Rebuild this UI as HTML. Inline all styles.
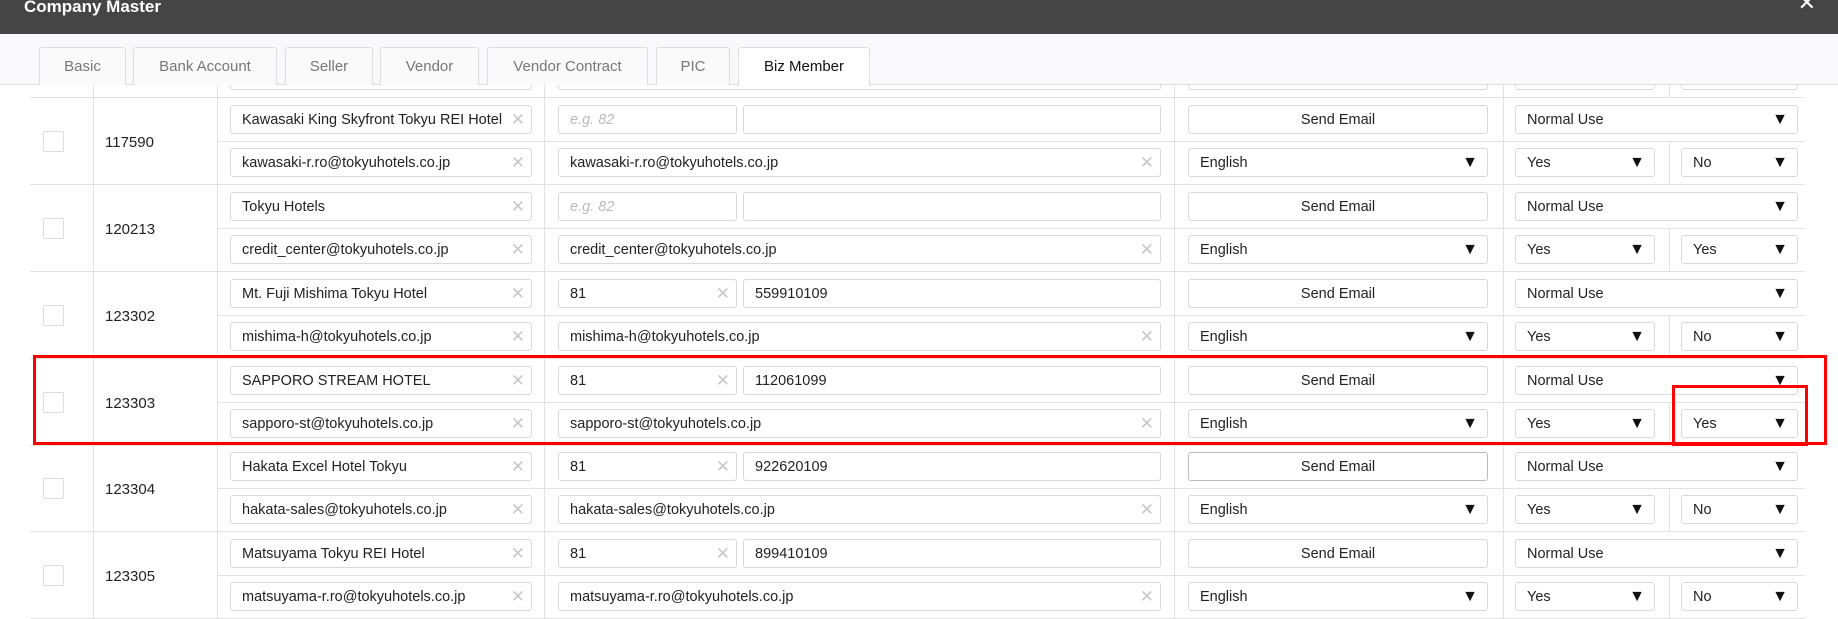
<!DOCTYPE html>
<html><head><meta charset="utf-8"><style>
*{box-sizing:border-box;margin:0;padding:0}
body{width:1838px;height:614px;overflow:hidden;background:#fff;font-family:"Liberation Sans",Arial,sans-serif;font-size:15px;color:#222;position:relative}
.hdr{position:absolute;left:0;top:0;width:1838px;height:34px;background:#454545;color:#fff;font-weight:bold;font-size:17px;padding:0 0 0 24px;line-height:14px;z-index:5}
.close{position:absolute;right:22px;top:-4px;font-size:22px;font-weight:normal;color:#fff}
.tabs{position:absolute;left:0;top:34px;width:1838px;height:51px;background:#f9f8fa;border-bottom:1px solid #ddd;z-index:5}
.tab{position:absolute;top:13px;height:38px;border:1px solid #ddd;border-bottom:none;border-radius:3px 3px 0 0;background:#fafafa;color:#777;text-align:center;line-height:38px;font-size:15px}
.tab.act{background:#fff;color:#111;height:39px}
.g{position:absolute;left:30px;width:1775px;height:87px;border-bottom:1px solid #e2e2e2}
.g .mid{position:absolute;left:187px;right:0;top:43px;border-top:1px solid #e2e2e2}
.vl{position:absolute;top:0;bottom:0;border-left:1px solid #e2e2e2}
.vl2{position:absolute;top:44px;bottom:0;border-left:1px solid #e2e2e2}
.cb{position:absolute;left:13px;top:33px;width:21px;height:21px;border:1px solid #ddd;border-radius:2px;background:#fff}
.id{position:absolute;left:75px;top:36px;font-size:15px}
.in{position:absolute;height:29px;border:1px solid #d9d9d9;border-radius:3px;background:#fff;line-height:29px;padding-left:11px;white-space:nowrap;overflow:hidden;font-size:14.5px}
.x{position:absolute;right:6px;top:0;color:#c8c8c8;font-size:17px;background:#fff;padding-left:2px;line-height:28px}
.ph{color:#bbb;font-style:italic}
.arr{position:absolute;right:9px;top:0;font-size:16px;color:#111;line-height:28px}
.btn{text-align:center;padding:0}
.r1{top:7px}.r2{top:50px}
.c1{left:200px;width:302px}.c2{left:528px;width:179px}.c3{left:713px;width:418px}.c23{left:528px;width:603px}
.c4{left:1158px;width:300px}.c5{left:1485px;width:283px}.c6{left:1485px;width:140px}.c7{left:1651px;width:117px}
.red{position:absolute;border:3px solid #f00;z-index:6}
</style></head><body>
<div class="hdr">Company Master<span class="close">✕</span></div>
<div class="tabs">
<div class="tab" style="left:39px;width:87px">Basic</div>
<div class="tab" style="left:133px;width:144px">Bank Account</div>
<div class="tab" style="left:285px;width:88px">Seller</div>
<div class="tab" style="left:380px;width:99px">Vendor</div>
<div class="tab" style="left:487px;width:161px">Vendor Contract</div>
<div class="tab" style="left:656px;width:74px">PIC</div>
<div class="tab act" style="left:738px;width:132px">Biz Member</div>
</div>

<div class="g" style="top:11px"><div class="mid"></div><div class="vl" style="left:63px"></div><div class="vl" style="left:187px"></div><div class="vl" style="left:514px"></div><div class="vl" style="left:1144px"></div><div class="vl" style="left:1473px"></div><div class="vl2" style="left:1639px"></div>
<div class="in r2 c1"></div><div class="in r2 c23"></div><div class="in r2 c4"></div><div class="in r2 c6"></div><div class="in r2 c7"></div></div>

<div class="g" style="top:98px"><div class="mid"></div><div class="vl" style="left:63px"></div><div class="vl" style="left:187px"></div><div class="vl" style="left:514px"></div><div class="vl" style="left:1144px"></div><div class="vl" style="left:1473px"></div><div class="vl2" style="left:1639px"></div>
<div class="cb"></div><div class="id">117590</div>
<div class="in r1 c1">Kawasaki King Skyfront Tokyu REI Hotel<span class="x">✕</span></div><div class="in r1 c2"><span class="ph">e.g. 82</span></div><div class="in r1 c3"></div><div class="in r1 c4 btn">Send Email</div><div class="in r1 c5">Normal Use<span class="arr">▼</span></div>
<div class="in r2 c1">kawasaki-r.ro@tokyuhotels.co.jp<span class="x">✕</span></div><div class="in r2 c23">kawasaki-r.ro@tokyuhotels.co.jp<span class="x">✕</span></div><div class="in r2 c4">English<span class="arr">▼</span></div><div class="in r2 c6">Yes<span class="arr">▼</span></div><div class="in r2 c7">No<span class="arr">▼</span></div></div>

<div class="g" style="top:185px"><div class="mid"></div><div class="vl" style="left:63px"></div><div class="vl" style="left:187px"></div><div class="vl" style="left:514px"></div><div class="vl" style="left:1144px"></div><div class="vl" style="left:1473px"></div><div class="vl2" style="left:1639px"></div>
<div class="cb"></div><div class="id">120213</div>
<div class="in r1 c1">Tokyu Hotels<span class="x">✕</span></div><div class="in r1 c2"><span class="ph">e.g. 82</span></div><div class="in r1 c3"></div><div class="in r1 c4 btn">Send Email</div><div class="in r1 c5">Normal Use<span class="arr">▼</span></div>
<div class="in r2 c1">credit_center@tokyuhotels.co.jp<span class="x">✕</span></div><div class="in r2 c23">credit_center@tokyuhotels.co.jp<span class="x">✕</span></div><div class="in r2 c4">English<span class="arr">▼</span></div><div class="in r2 c6">Yes<span class="arr">▼</span></div><div class="in r2 c7">Yes<span class="arr">▼</span></div></div>

<div class="g" style="top:272px"><div class="mid"></div><div class="vl" style="left:63px"></div><div class="vl" style="left:187px"></div><div class="vl" style="left:514px"></div><div class="vl" style="left:1144px"></div><div class="vl" style="left:1473px"></div><div class="vl2" style="left:1639px"></div>
<div class="cb"></div><div class="id">123302</div>
<div class="in r1 c1">Mt. Fuji Mishima Tokyu Hotel<span class="x">✕</span></div><div class="in r1 c2">81<span class="x">✕</span></div><div class="in r1 c3">559910109</div><div class="in r1 c4 btn">Send Email</div><div class="in r1 c5">Normal Use<span class="arr">▼</span></div>
<div class="in r2 c1">mishima-h@tokyuhotels.co.jp<span class="x">✕</span></div><div class="in r2 c23">mishima-h@tokyuhotels.co.jp<span class="x">✕</span></div><div class="in r2 c4">English<span class="arr">▼</span></div><div class="in r2 c6">Yes<span class="arr">▼</span></div><div class="in r2 c7">No<span class="arr">▼</span></div></div>

<div class="g" style="top:359px"><div class="mid"></div><div class="vl" style="left:63px"></div><div class="vl" style="left:187px"></div><div class="vl" style="left:514px"></div><div class="vl" style="left:1144px"></div><div class="vl" style="left:1473px"></div><div class="vl2" style="left:1639px"></div>
<div class="cb"></div><div class="id">123303</div>
<div class="in r1 c1">SAPPORO STREAM HOTEL<span class="x">✕</span></div><div class="in r1 c2">81<span class="x">✕</span></div><div class="in r1 c3">112061099</div><div class="in r1 c4 btn">Send Email</div><div class="in r1 c5">Normal Use<span class="arr">▼</span></div>
<div class="in r2 c1">sapporo-st@tokyuhotels.co.jp<span class="x">✕</span></div><div class="in r2 c23">sapporo-st@tokyuhotels.co.jp<span class="x">✕</span></div><div class="in r2 c4">English<span class="arr">▼</span></div><div class="in r2 c6">Yes<span class="arr">▼</span></div><div class="in r2 c7">Yes<span class="arr">▼</span></div></div>

<div class="g" style="top:445px"><div class="mid"></div><div class="vl" style="left:63px"></div><div class="vl" style="left:187px"></div><div class="vl" style="left:514px"></div><div class="vl" style="left:1144px"></div><div class="vl" style="left:1473px"></div><div class="vl2" style="left:1639px"></div>
<div class="cb"></div><div class="id">123304</div>
<div class="in r1 c1">Hakata Excel Hotel Tokyu<span class="x">✕</span></div><div class="in r1 c2">81<span class="x">✕</span></div><div class="in r1 c3">922620109</div><div class="in r1 c4 btn" style="border-color:#bbb">Send Email</div><div class="in r1 c5">Normal Use<span class="arr">▼</span></div>
<div class="in r2 c1">hakata-sales@tokyuhotels.co.jp<span class="x">✕</span></div><div class="in r2 c23">hakata-sales@tokyuhotels.co.jp<span class="x">✕</span></div><div class="in r2 c4">English<span class="arr">▼</span></div><div class="in r2 c6">Yes<span class="arr">▼</span></div><div class="in r2 c7">No<span class="arr">▼</span></div></div>

<div class="g" style="top:532px"><div class="mid"></div><div class="vl" style="left:63px"></div><div class="vl" style="left:187px"></div><div class="vl" style="left:514px"></div><div class="vl" style="left:1144px"></div><div class="vl" style="left:1473px"></div><div class="vl2" style="left:1639px"></div>
<div class="cb"></div><div class="id">123305</div>
<div class="in r1 c1">Matsuyama Tokyu REI Hotel<span class="x">✕</span></div><div class="in r1 c2">81<span class="x">✕</span></div><div class="in r1 c3">899410109</div><div class="in r1 c4 btn">Send Email</div><div class="in r1 c5">Normal Use<span class="arr">▼</span></div>
<div class="in r2 c1">matsuyama-r.ro@tokyuhotels.co.jp<span class="x">✕</span></div><div class="in r2 c23">matsuyama-r.ro@tokyuhotels.co.jp<span class="x">✕</span></div><div class="in r2 c4">English<span class="arr">▼</span></div><div class="in r2 c6">Yes<span class="arr">▼</span></div><div class="in r2 c7">No<span class="arr">▼</span></div></div>

<div class="red" style="left:33px;top:355px;width:1794px;height:90px"></div>
<div class="red" style="left:1672px;top:385px;width:136px;height:61px"></div>
</body></html>
